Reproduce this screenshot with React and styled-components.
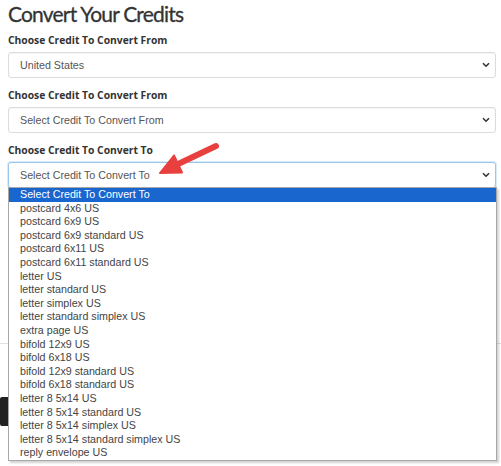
import React from 'react'
import styled, { createGlobalStyle } from 'styled-components'

const GlobalStyle = createGlobalStyle`
    body {
        margin: 0;
        background: #fff;
        font-family: "Open Sans", "Liberation Sans", sans-serif;
        color: #333;
    }
`

const Page = styled.div`
    position: relative;
    width: 501px;
    height: 466px;
    overflow: hidden;
    padding: 0 5px 0 8px;
    box-sizing: border-box;
`

const Title = styled.h1`
    margin: 0;
    font-family: Lato, "Open Sans", sans-serif;
    font-size: 21px;
    font-weight: 400;
    letter-spacing: -0.8px;
    line-height: 28px;
    color: #333;
    -webkit-text-stroke: 0.3px #333;
`

const Group = styled.div`
    display: flex;
    flex-direction: column;
    margin-top: ${p => p.$top}px;
`

const Label = styled.label`
    font-size: 10.3px;
    font-weight: 700;
    line-height: 15px;
    color: #333;
    margin-bottom: 4px;
`

const SelectWrap = styled.div`
    position: relative;
`

const SelectBox = styled.div`
    display: flex;
    align-items: center;
    justify-content: space-between;
    height: 26px;
    box-sizing: border-box;
    padding: 0 5px 0 11px;
    border: 1px solid ${p => (p.$focused ? '#9cc6ec' : '#dcdcdc')};
    border-radius: 3px;
    box-shadow: ${p => (p.$focused ? '0 0 0 1px rgba(102,175,233,0.25)' : 'inset 0 1px 1px rgba(0,0,0,0.04)')};
    font-family: "Liberation Sans", Arial, sans-serif;
    font-size: 10.7px;
    color: #555;
    background: #fff;
`

const ListBox = styled.ul`
    position: absolute;
    top: 25px;
    left: 0;
    right: -1px;
    margin: 0;
    padding: 0;
    list-style: none;
    background: #fff;
    border: 1px solid #a8a8a8;
    box-shadow: 2px 2px 2px rgba(0,0,0,0.18);
    font-family: "Liberation Sans", Arial, sans-serif;
    font-size: 10.7px;
    z-index: 5;
`

const Option = styled.li`
    height: 13.6px;
    line-height: 13.6px;
    padding-left: 11px;
    color: ${p => (p.$active ? '#fff' : '#444')};
    background: ${p => (p.$active ? '#1a66cf' : 'transparent')};
    white-space: nowrap;
`

const Divider = styled.div`
    height: 1px;
    background: #e2e2e2;
    margin: 155px -8px 0;
`

const DarkButton = styled.div`
    width: 160px;
    height: 29px;
    margin: 53px 0 0 -8px;
    background: #222;
    border-radius: 2px;
`

const Pointer = styled.svg`
    position: absolute;
    left: 0;
    top: 0;
    pointer-events: none;
    z-index: 6;
`

const Chevron = () => (
    <svg width="8" height="6" viewBox="0 0 8 6">
        <path d="M1 1.2 L4 4.2 L7 1.2" fill="none" stroke="#333" strokeWidth="1.6" />
    </svg>
)

const options = [
    'Select Credit To Convert To',
    'postcard 4x6 US',
    'postcard 6x9 US',
    'postcard 6x9 standard US',
    'postcard 6x11 US',
    'postcard 6x11 standard US',
    'letter US',
    'letter standard US',
    'letter simplex US',
    'letter standard simplex US',
    'extra page US',
    'bifold 12x9 US',
    'bifold 6x18 US',
    'bifold 12x9 standard US',
    'bifold 6x18 standard US',
    'letter 8 5x14 US',
    'letter 8 5x14 standard US',
    'letter 8 5x14 simplex US',
    'letter 8 5x14 standard simplex US',
    'reply envelope US'
]

export default function App() {
    return (
        <Page>
            <GlobalStyle />
            <Title>Convert Your Credits</Title>

            <Group $top={5}>
                <Label>Choose Credit To Convert From</Label>
                <SelectWrap>
                    <SelectBox>United States<Chevron /></SelectBox>
                </SelectWrap>
            </Group>

            <Group $top={10}>
                <Label>Choose Credit To Convert From</Label>
                <SelectWrap>
                    <SelectBox>Select Credit To Convert From<Chevron /></SelectBox>
                </SelectWrap>
            </Group>

            <Group $top={10}>
                <Label>Choose Credit To Convert To</Label>
                <SelectWrap>
                    <SelectBox $focused>Select Credit To Convert To<Chevron /></SelectBox>
                    <ListBox>
                        {options.map((o, i) => (
                            <Option key={o} $active={i === 0}>{o}</Option>
                        ))}
                    </ListBox>
                </SelectWrap>
            </Group>

            <Divider />
            <DarkButton />

            <Pointer width="501" height="466">
                <line x1="216" y1="146" x2="176" y2="165" stroke="#e8403f" strokeWidth="6" strokeLinecap="round" />
                <polygon points="160,173 182,172.5 174,155.5" fill="#e8403f" stroke="#e8403f" strokeWidth="2" strokeLinejoin="round" />
            </Pointer>
        </Page>
    )
}
